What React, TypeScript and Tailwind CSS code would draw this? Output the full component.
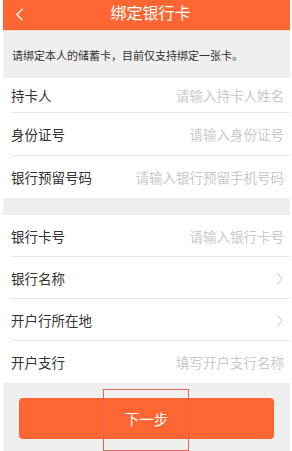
import { ChevronLeft } from 'lucide-react';

const font = { fontFamily: '"Noto Sans CJK SC", "Noto Sans", sans-serif' };

const topRows = [
  { label: '持卡人', hint: '请输入持卡人姓名', h: 'h-[35px]' },
  { label: '身份证号', hint: '请输入身份证号', h: 'h-[43px]' },
  { label: '银行预留号码', hint: '请输入银行预留手机号码', h: 'h-[42px]' },
];

const bottomRows = [
  { label: '银行卡号', hint: '请输入银行卡号', arrow: false },
  { label: '银行名称', hint: '', arrow: true },
  { label: '开户行所在地', hint: '', arrow: true },
  { label: '开户支行', hint: '填写开户支行名称', arrow: false },
];

const Row = ({ label, hint, arrow, h, last }: { label: string; hint: string; arrow?: boolean; h: string; last?: boolean }) => (
  <div className={`${h} flex items-center justify-between pl-[8px] pr-[6px] relative`}>
    <span className="text-[13.5px] text-[#333]">{label}</span>
    {arrow ? (
      <svg width="7" height="13" viewBox="0 0 7 13" className="mr-[1px]">
        <polyline points="1,0.5 6,6.5 1,12.5" fill="none" stroke="#c4c4c4" strokeWidth="1" />
      </svg>
    ) : (
      <span className="text-[13.5px] text-[#cacaca]">{hint}</span>
    )}
    {!last && <div className="absolute left-[8px] right-0 bottom-0 h-px bg-[#e8e8e8]" />}
  </div>
);

const App = () => {
  return (
    <div className="w-[292px] h-[451px] bg-white pl-[3px] pr-[2px] overflow-hidden" style={font}>
      <div className="h-full flex flex-col bg-[#efefef] relative">
        <div className="h-[31px] bg-[#fd6633] flex items-center justify-center relative border-b border-[#f6d9c8]">
          <ChevronLeft className="absolute left-[6px] top-[4px] size-[21px] text-white" strokeWidth={1.5} />
          <span className="text-[16px] text-white -mt-[6px] ml-[8px]">绑定银行卡</span>
        </div>
        <div className="h-[47px] flex items-center pl-[9px] pt-[2px] text-[11px] text-[#333]">
          请绑定本人的储蓄卡，目前仅支持绑定一张卡。
        </div>
        <div className="bg-white">
          {topRows.map((r, i) => (
            <Row key={r.label} label={r.label} hint={r.hint} h={r.h} last={i === topRows.length - 1} />
          ))}
        </div>
        <div className="h-[17px]" />
        <div className="bg-white">
          {bottomRows.map((r, i) => (
            <Row key={r.label} label={r.label} hint={r.hint} arrow={r.arrow} h="h-[42px]" last={i === bottomRows.length - 1} />
          ))}
        </div>
        <div className="flex-1 px-[16px] pt-[15px]">
          <div className="h-[41px] rounded-[4px] bg-[#fd6633] flex items-center justify-center text-[14.5px] text-white">
            下一步
          </div>
        </div>
        <div className="absolute left-[100px] top-[389px] w-[86px] h-[62px] border border-[#e06a5a]" />
      </div>
    </div>
  );
};

export default App;
